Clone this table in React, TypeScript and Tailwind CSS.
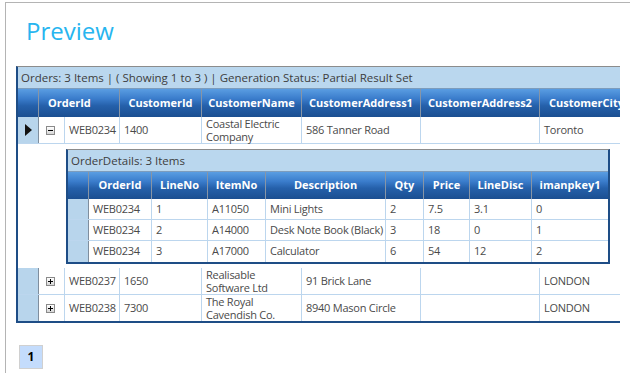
import React from 'react';

const font = "font-['Open_Sans',sans-serif]";

type MainRow = {
  id: string;
  cid: string;
  name: string[];
  a1: string;
  a2: string;
  city: string;
  open: boolean;
};

const orders: MainRow[] = [
  { id: 'WEB0234', cid: '1400', name: ['Coastal Electric', 'Company'], a1: '586 Tanner Road', a2: '', city: 'Toronto', open: true },
  { id: 'WEB0237', cid: '1650', name: ['Realisable', 'Software Ltd'], a1: '91 Brick Lane', a2: '', city: 'LONDON', open: false },
  { id: 'WEB0238', cid: '7300', name: ['The Royal', 'Cavendish Co.'], a1: '8940 Mason Circle', a2: '', city: 'LONDON', open: false },
];

const details = [
  ['WEB0234', '1', 'A11050', 'Mini Lights', '2', '7.5', '3.1', '0'],
  ['WEB0234', '2', 'A14000', 'Desk Note Book (Black)', '3', '18', '0', '1'],
  ['WEB0234', '3', 'A17000', 'Calculator', '6', '54', '12', '2'],
];

const detailCols = ['w-[63px]', 'w-[56px]', 'w-[58px]', 'w-[120px]', 'w-[38px]', 'w-[46px]', 'w-[62px]', 'w-[76px]'];
const detailHeads = ['OrderId', 'LineNo', 'ItemNo', 'Description', 'Qty', 'Price', 'LineDisc', 'imanpkey1'];

const headBg = 'bg-[linear-gradient(to_bottom,#5a9de2_0%,#3a7ccb_35%,#2560aa_60%,#1b4f91_100%)]';

function Pointer() {
  return (
    <svg width="7" height="12" viewBox="0 0 7 12" className="block">
      <path d="M0 0 L7 6 L0 12 Z" fill="#111" />
    </svg>
  );
}

function ExpandBox({ open }: { open: boolean }) {
  return (
    <span className="relative block w-[9px] h-[9px] border border-[#8a8a8a] bg-[linear-gradient(to_bottom,#ffffff,#d6d6d6)]">
      <span className="absolute left-[1px] top-[3px] w-[5px] h-[1px] bg-black" />
      {!open && <span className="absolute left-[3px] top-[1px] w-[1px] h-[5px] bg-black" />}
    </span>
  );
}

function HeadCell({ className, children }: { className: string; children?: React.ReactNode }) {
  return (
    <div className={`${className} shrink-0 h-full border-r border-[#8795a6] flex items-center whitespace-nowrap text-white font-bold text-[11px]`}>
      {children}
    </div>
  );
}

function Cell({ className, children }: { className: string; children?: React.ReactNode }) {
  return (
    <div className={`${className} shrink-0 h-full border-r border-[#bcd6ee] flex items-center whitespace-nowrap pl-[4px] text-[11px] tracking-[-0.25px] text-[#4a4a4a]`}>
      {children}
    </div>
  );
}

function OrderDetails() {
  return (
    <div className="w-[544px] border-t border-t-[#8c8c8c] border-l-2 border-r-2 border-b-2 border-l-[#1e4d86] border-r-[#1e4d86] border-b-[#1e4d86]">
      <div className="h-[22px] border-b border-[#7d9cbc] bg-[#bad7ee] pl-[3px] flex items-center text-[11.5px] text-[#3d3d3d]">
        OrderDetails: 3 Items
      </div>
      <div className={`flex h-[27px] ${headBg}`}>
        <HeadCell className="w-[21px]" />
        {detailHeads.map((h, i) => (
          <HeadCell key={h} className={`${detailCols[i]} justify-center ${i === detailHeads.length - 1 ? 'border-r-0' : ''}`}>
            {h}
          </HeadCell>
        ))}
      </div>
      {details.map((r, ri) => (
        <div key={ri} className={`flex h-[21px] ${ri < details.length - 1 ? 'border-b border-[#bcd6ee]' : ''}`}>
          <div className="w-[21px] shrink-0 h-full bg-[#b8d5ec] border-r border-[#7f8e9e]" />
          {r.map((v, i) => (
            <Cell key={i} className={`${detailCols[i]} ${i === r.length - 1 ? 'border-r-0' : ''}`}>
              {v}
            </Cell>
          ))}
        </div>
      ))}
    </div>
  );
}

function OrderRow({ row }: { row: MainRow }) {
  return (
    <div className="flex h-[27px] border-b border-[#bcd6ee]">
      <div className="w-[21px] shrink-0 h-full bg-[#b8d5ec] border-r border-[#7f8e9e] flex items-center justify-center">
        {row.open && <Pointer />}
      </div>
      <div className="w-[26px] shrink-0 h-full border-r border-[#bcd6ee] flex items-center pl-[7px]">
        <ExpandBox open={row.open} />
      </div>
      <Cell className="w-[55px]">{row.id}</Cell>
      <Cell className="w-[82px]">{row.cid}</Cell>
      <Cell className="w-[100px]">
        <span className="flex flex-col leading-[13px]">
          <span>{row.name[0]}</span>
          <span>{row.name[1]}</span>
        </span>
      </Cell>
      <Cell className="w-[119px]">{row.a1}</Cell>
      <Cell className="w-[119px]">{row.a2}</Cell>
      <Cell className="w-[100px]">{row.city}</Cell>
    </div>
  );
}

export default function App() {
  return (
    <div className={`${font} min-h-[383px] bg-white pt-[2px] pl-[5px]`}>
      <div className="w-[625px] h-[371px] border-t border-l border-[#b4b4b4]">
        <h1 className="ml-[20px] mt-[16px] h-[24px] leading-[24px] text-[24px] text-[#27b5ef]">Preview</h1>

        <div className="ml-[10px] mt-[23px] w-[604px] overflow-hidden border-t border-t-[#8c8c8c] border-l-2 border-b-2 border-l-[#1e4d86] border-b-[#1e4d86]">
          <div className="h-[22px] w-[610px] border-b border-[#7d9cbc] bg-[#bad7ee] pl-[3px] flex items-center text-[11.5px] text-[#3d3d3d] whitespace-nowrap">
            Orders: 3 Items | ( Showing 1 to 3 ) | Generation Status: Partial Result Set
          </div>
          <div className={`flex w-max h-[28px] ${headBg}`}>
            <HeadCell className="w-[21px]" />
            <HeadCell className="w-[81px] pl-[9px]">OrderId</HeadCell>
            <HeadCell className="w-[82px] justify-center">CustomerId</HeadCell>
            <HeadCell className="w-[100px] justify-center">CustomerName</HeadCell>
            <HeadCell className="w-[119px] justify-center">CustomerAddress1</HeadCell>
            <HeadCell className="w-[119px] justify-center">CustomerAddress2</HeadCell>
            <HeadCell className="w-[100px] pl-[9px]">CustomerCity</HeadCell>
          </div>

          <OrderRow row={orders[0]} />
          <div className="pl-[48px] pt-[5px] pb-[4px]">
            <OrderDetails />
          </div>
          <OrderRow row={orders[1]} />
          <div className="-mb-px">
            <OrderRow row={orders[2]} />
          </div>
        </div>

        <div className="ml-[13px] mt-[22px] w-[24px] h-[24px] border border-[#d0d0d0] bg-[#c4dcfc] flex items-center justify-center text-[12px] font-bold text-black">
          1
        </div>
      </div>
    </div>
  );
}
